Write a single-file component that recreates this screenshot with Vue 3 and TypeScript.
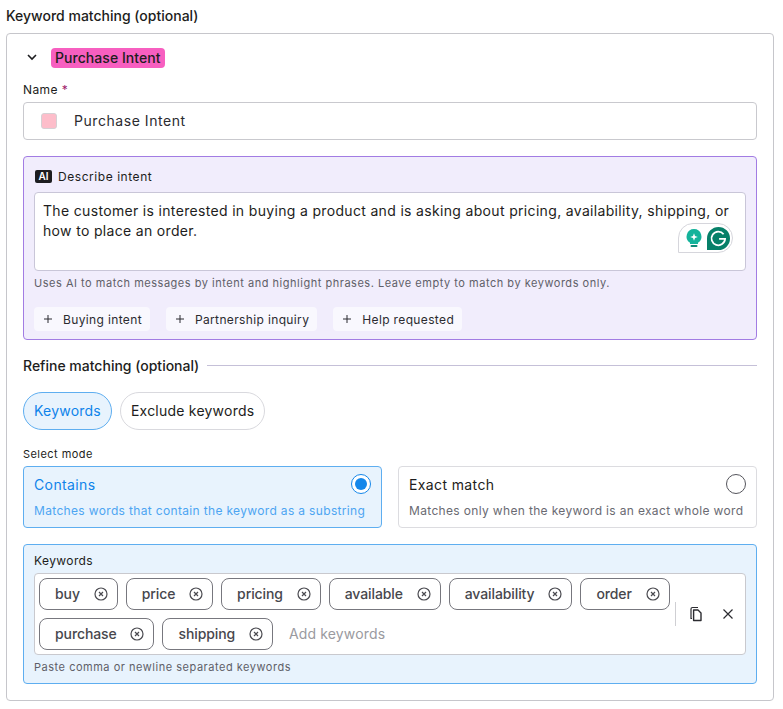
<script setup lang="ts">
const chips = ["Buying intent", "Partnership inquiry", "Help requested"];
const keywords = ["buy", "price", "pricing", "available", "availability", "order", "purchase", "shipping"];
</script>

<template>
  <div class="page">
    <div class="title">Keyword matching (optional)</div>
    <div class="card">
      <div class="head">
        <svg class="chevron" width="12" height="12" viewBox="0 0 12 12" fill="none">
          <path d="M2 4l4 4 4-4" stroke="#1d1d20" stroke-width="1.6" />
        </svg>
        <span class="badge">Purchase Intent</span>
      </div>

      <div class="label name-label">Name <span class="req">*</span></div>
      <div class="name-input">
        <span class="swatch"></span>
        <span>Purchase Intent</span>
      </div>

      <div class="intent">
        <div class="label intent-label"><span class="ai">AI</span>Describe intent</div>
        <div class="textarea">
          The customer is interested in buying a product and is asking about pricing, availability, shipping, or how to place an order.
          <div class="grammarly">
            <svg width="18" height="20" viewBox="0 0 18 20">
              <path d="M9 1a7.5 7.5 0 0 0-4 13.8V16h8v-1.2A7.5 7.5 0 0 0 9 1z" fill="#14b39b" />
              <path d="M9 5.2l1 2.8 2.8 1-2.8 1-1 2.8-1-2.8-2.8-1 2.8-1z" fill="#fff" />
              <rect x="5.5" y="17" width="7" height="2" rx="1" fill="#0f8a78" />
            </svg>
            <svg width="23" height="23" viewBox="0 0 23 23">
              <path d="M11.5 0a11.5 11.5 0 0 1 0 23H0V11.5A11.5 11.5 0 0 1 11.5 0z" fill="#078069" />
              <path d="M16.6 7.2a6.8 6.8 0 1 0 1.5 4.6h-6" fill="none" stroke="#fff" stroke-width="1.8" />
            </svg>
          </div>
        </div>
        <div class="hint">Uses AI to match messages by intent and highlight phrases. Leave empty to match by keywords only.</div>
        <div class="chips">
          <span v-for="c in chips" :key="c" class="chip">
            <svg width="10" height="10" viewBox="0 0 10 10" fill="none">
              <path d="M5 1v8M1 5h8" stroke="#2b2b30" stroke-width="1" />
            </svg>
            {{ c }}
          </span>
        </div>
      </div>

      <div class="refine">
        <span>Refine matching (optional)</span>
        <span class="rule"></span>
      </div>

      <div class="tabs">
        <span class="tab active">Keywords</span>
        <span class="tab">Exclude keywords</span>
      </div>

      <div class="label mode-label">Select mode</div>
      <div class="modes">
        <div class="mode selected">
          <div class="mode-top">
            <span>Contains</span>
            <span class="radio on"><i></i></span>
          </div>
          <div class="mode-desc">Matches words that contain the keyword as a substring</div>
        </div>
        <div class="mode">
          <div class="mode-top">
            <span>Exact match</span>
            <span class="radio"></span>
          </div>
          <div class="mode-desc">Matches only when the keyword is an exact whole word</div>
        </div>
      </div>

      <div class="kw-box">
        <div class="label kw-label">Keywords</div>
        <div class="tag-input">
          <div class="tags">
            <span v-for="k in keywords" :key="k" class="tag">
              {{ k }}
              <svg width="14" height="14" viewBox="0 0 14 14" fill="none">
                <circle cx="7" cy="7" r="6" stroke="#4a4a50" stroke-width="1.2" />
                <path d="M5 5l4 4M9 5l-4 4" stroke="#4a4a50" stroke-width="1.2" />
              </svg>
            </span>
            <span class="placeholder">Add keywords</span>
          </div>
          <div class="actions">
            <svg width="14" height="16" viewBox="0 0 14 16" fill="none">
              <path d="M3 12.5H2V3a1.5 1.5 0 0 1 1.5-1.5H9" stroke="#2b2b30" stroke-width="1.2" />
              <path d="M4.6 4H9l3 3v7.5H4.6z" stroke="#2b2b30" stroke-width="1.4" stroke-linejoin="round" />
            </svg>
            <svg width="12" height="12" viewBox="0 0 12 12" fill="none">
              <path d="M1.5 1.5l9 9M10.5 1.5l-9 9" stroke="#2b2b30" stroke-width="1.2" />
            </svg>
          </div>
        </div>
        <div class="hint kw-hint">Paste comma or newline separated keywords</div>
      </div>
    </div>
  </div>
</template>

<style>
html, body {
  margin: 0;
  background: #fff;
}
</style>

<style scoped>
.page {
  box-sizing: border-box;
  width: 783px;
  height: 709px;
  padding: 7px 9px 0 6px;
  font-family: Inter, "Liberation Sans", sans-serif;
  color: #1d1d20;
  overflow: hidden;
}
.title {
  font-size: 14px;
  font-weight: 500;
  line-height: 18px;
  margin-bottom: 8px;
}
.card {
  box-sizing: border-box;
  height: 668px;
  border: 1px solid #c6c6cb;
  border-radius: 4px;
  padding: 14px 16px 0;
}
.head {
  display: flex;
  align-items: center;
  height: 20px;
  padding-left: 3px;
  gap: 13px;
}
.chevron {
  margin-top: -3px;
}
.badge {
  background: #f75fc0;
  border-radius: 4px;
  font-size: 14px;
  font-weight: 500;
  line-height: 20px;
  padding: 0 4px;
  letter-spacing: 0.05px;
}
.label {
  font-size: 11.5px;
  line-height: 14px;
  letter-spacing: 0.4px;
}
.name-label {
  margin-top: 15px;
  font-size: 12px;
}
.req {
  color: #a01a6a;
}
.name-input {
  box-sizing: border-box;
  display: flex;
  align-items: center;
  height: 38px;
  margin-top: 5px;
  border: 1px solid #c9c9ce;
  border-radius: 4px;
  padding: 0 0 1px 17px;
  gap: 17px;
  font-size: 14px;
  letter-spacing: 0.55px;
  color: #2b2b30;
}
.swatch {
  width: 16px;
  height: 16px;
  margin-top: 1px;
  background: #fdbdca;
  border: 1px solid #d5d0d4;
  border-radius: 3px;
  box-sizing: border-box;
}
.intent {
  box-sizing: border-box;
  height: 184px;
  margin-top: 16px;
  background: #f1edfc;
  border: 1px solid #a27ce3;
  border-radius: 4px;
  padding: 13px 10px 0;
}
.intent-label {
  display: flex;
  align-items: center;
  height: 14px;
  font-size: 12px;
  letter-spacing: 0.55px;
}
.ai {
  background: #1d1d20;
  color: #fff;
  border-radius: 2px;
  font-size: 10px;
  font-weight: 600;
  line-height: 13px;
  width: 17px;
  text-align: center;
  letter-spacing: 0;
  margin: -1px 6px 0 1px;
}
.textarea {
  box-sizing: border-box;
  position: relative;
  height: 79px;
  margin-top: 8px;
  background: #fff;
  border: 1px solid #c9c6d8;
  border-radius: 4px;
  padding: 8px 8px 0;
  font-size: 14px;
  line-height: 20px;
  letter-spacing: 0.33px;
}
.grammarly {
  position: absolute;
  right: 12px;
  bottom: 17px;
  display: flex;
  align-items: center;
  gap: 4px;
  box-sizing: border-box;
  width: 55px;
  height: 30px;
  padding-left: 6px;
  background: #fff;
  border: 1px solid #d6d6dc;
  border-radius: 15px 15px 15px 0;
}
.hint {
  font-size: 11px;
  line-height: 14px;
  letter-spacing: 0.52px;
  color: #5f5f68;
}
.intent .hint {
  margin-top: 5px;
}
.chips {
  display: flex;
  gap: 16px;
  margin-top: 17px;
}
.chip {
  display: flex;
  align-items: center;
  height: 24px;
  padding: 0 8px 0 9px;
  gap: 10px;
  background: #f9f8fe;
  border-radius: 4px;
  font-size: 12px;
  letter-spacing: 0.36px;
  color: #2b2b30;
}
.refine {
  display: flex;
  align-items: center;
  gap: 8px;
  margin-top: 16px;
  height: 18px;
  font-size: 14px;
  font-weight: 500;
}
.rule {
  flex: 1;
  height: 1px;
  margin-top: 1px;
  background: #c5c0d8;
}
.tabs {
  display: flex;
  gap: 8px;
  margin-top: 18px;
}
.tab {
  box-sizing: border-box;
  display: flex;
  align-items: center;
  height: 38px;
  padding: 0 10px 1px;
  border: 1px solid #d9d9de;
  border-radius: 19px;
  font-size: 14px;
  letter-spacing: 0.22px;
}
.tab.active {
  background: #e8f3fd;
  border-color: #5eaef0;
  color: #0f83ea;
}
.mode-label {
  margin-top: 17px;
  font-size: 11px;
  letter-spacing: 0.45px;
}
.modes {
  display: grid;
  grid-template-columns: 359px 359px;
  gap: 16px;
  margin-top: 5px;
}
.mode {
  box-sizing: border-box;
  height: 62px;
  border: 1px solid #dcdce0;
  border-radius: 4px;
  padding: 7px 10px 0;
}
.mode-top {
  display: flex;
  justify-content: space-between;
  align-items: center;
  height: 20px;
  font-size: 14px;
  letter-spacing: 0.38px;
}
.mode-desc {
  margin-top: 9px;
  font-size: 12px;
  line-height: 16px;
  letter-spacing: 0.34px;
  color: #6a6a72;
  white-space: nowrap;
}
.mode.selected {
  background: #e8f3fd;
  border-color: #5eaef0;
}
.selected .mode-top {
  color: #0f83ea;
}
.selected .mode-desc {
  color: #4da5f2;
}
.radio {
  box-sizing: border-box;
  width: 20px;
  height: 20px;
  border: 1px solid #55555c;
  border-radius: 50%;
  display: flex;
  align-items: center;
  justify-content: center;
  background: #fff;
}
.radio.on {
  border-color: #1587ea;
}
.radio i {
  width: 12px;
  height: 12px;
  border-radius: 50%;
  background: #1587ea;
}
.kw-box {
  box-sizing: border-box;
  height: 140px;
  margin-top: 16px;
  background: #e8f3fd;
  border: 1px solid #5eaef0;
  border-radius: 4px;
  padding: 9px 10px 0;
}
.kw-label {
  font-size: 12px;
}
.tag-input {
  box-sizing: border-box;
  display: flex;
  align-items: center;
  height: 82px;
  margin-top: 5px;
  background: #fff;
  border: 1px solid #c9c9ce;
  border-radius: 4px;
  padding-left: 4px;
}
.tags {
  flex: 1;
  display: flex;
  flex-wrap: wrap;
  align-items: center;
  gap: 8px;
}
.tag {
  box-sizing: border-box;
  display: flex;
  align-items: center;
  height: 32px;
  padding: 0 9px 1px 15px;
  gap: 13.85px;
  border: 1px solid #77777e;
  border-radius: 8px;
  font-size: 14px;
  font-weight: 500;
  letter-spacing: -0.1px;
  color: #47474d;
}
.placeholder {
  margin: 0 0 1px 8px;
  font-size: 14px;
  letter-spacing: 0.15px;
  color: #9a9aa0;
}
.actions {
  display: flex;
  align-items: center;
  gap: 19px;
  height: 24px;
  padding: 0 11px 0 13px;
  border-left: 1px solid #cfcfd3;
}
.kw-hint {
  margin-top: 5px;
}
</style>
